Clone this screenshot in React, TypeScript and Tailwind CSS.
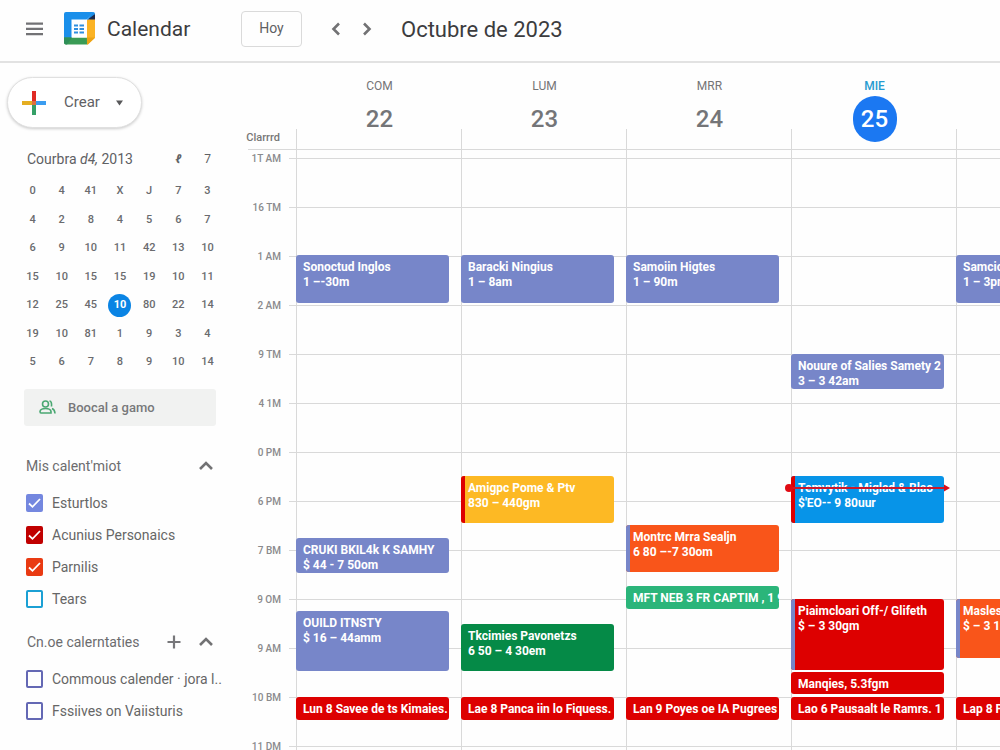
import React from "react";

type CalendarEvent = {
  title: string;
  time?: string;
  box: string;
  stripe?: string;
  now?: boolean;
};

type Day = {
  name: string;
  date: string;
  today?: boolean;
  events: CalendarEvent[];
};

type Source = { name: string; color: string; checked?: boolean };

const hours = ["1T AM", "16 TM", "1 AM", "2 AM", "9 TM", "4 1M", "0 PM", "6 PM", "7 BM", "9 OM", "9 AM", "10 BM", "11 DM"];

const days: Day[] = [
  {
    name: "COM",
    date: "22",
    events: [
      { title: "Sonoctud Inglos", time: "1 –-30m", box: "mt-[97px] h-[48px] bg-[#7786c9]" },
      { title: "CRUKI BKIL4k K SAMHY", time: "$ 44 - 7 50om", box: "mt-[235px] h-[35px] bg-[#7786c9]" },
      { title: "OUILD ITNSTY", time: "$ 16 – 44amm", box: "mt-[38px] h-[60px] bg-[#7786c9]" },
      { title: "Lun 8 Savee de ts Kimaies.", box: "mt-[26px] h-[23px] bg-[#dd0000]" },
    ],
  },
  {
    name: "LUM",
    date: "23",
    events: [
      { title: "Baracki Ningius", time: "1 – 8am", box: "mt-[97px] h-[48px] bg-[#7786c9]" },
      { title: "Amigpc Pome & Ptv", time: "830 – 440gm", box: "mt-[173px] h-[47px] bg-[#fdb924]", stripe: "bg-[#dd0000]" },
      { title: "Tkcimies Pavonetzs", time: "6 50 – 4 30em", box: "mt-[101px] h-[47px] bg-[#058a47]" },
      { title: "Lae 8 Panca iin lo Fiquess.", box: "mt-[26px] h-[23px] bg-[#dd0000]" },
    ],
  },
  {
    name: "MRR",
    date: "24",
    events: [
      { title: "Samoiin Higtes", time: "1 – 90m", box: "mt-[97px] h-[48px] bg-[#7786c9]" },
      { title: "Montrc Mrra Sealjn", time: "6 80 –-7 30om", box: "mt-[222px] h-[47px] bg-[#f9551a]", stripe: "bg-[#7786c9]" },
      { title: "MFT NEB 3 FR CAPTIM , 1 9", box: "mt-[14px] h-[23px] bg-[#2bb57a]" },
      { title: "Lan 9 Poyes oe IA Pugrees 1", box: "mt-[88px] h-[23px] bg-[#dd0000]" },
    ],
  },
  {
    name: "MIE",
    date: "25",
    today: true,
    events: [
      { title: "Nouure of Salies Samety 2", time: "3 – 3 42am", box: "mt-[196px] h-[35px] bg-[#7786c9]" },
      { title: "Temvytik - Miglad & Blao", time: "$'EO-- 9 80uur", box: "mt-[87px] h-[47px] bg-[#0794e8]", stripe: "bg-[#dd0000]", now: true },
      { title: "Piaimcloari Off-/ Glifeth", time: "$ – 3 30gm", box: "mt-[76px] h-[71px] bg-[#dd0000]", stripe: "bg-[#7786c9]" },
      { title: "Manqies, 5.3fgm", box: "mt-[2px] h-[22px] bg-[#dd0000]" },
      { title: "Lao 6 Pausaalt le Ramrs. 1", box: "mt-[3px] h-[23px] bg-[#dd0000]" },
    ],
  },
  {
    name: "",
    date: "",
    events: [
      { title: "Samcic", time: "1 – 3pm", box: "mt-[97px] h-[48px] bg-[#7786c9]" },
      { title: "Masles", time: "$ – 3 10", box: "mt-[296px] h-[59px] bg-[#f9551a]", stripe: "bg-[#7786c9]" },
      { title: "Lap 8 Panca", box: "mt-[39px] h-[23px] bg-[#dd0000]" },
    ],
  },
];

const miniHead = ["0", "4", "41", "X", "J", "7", "3"];
const miniRows = [
  ["4", "2", "8", "4", "5", "6", "7"],
  ["6", "9", "10", "11", "42", "13", "10"],
  ["15", "10", "15", "15", "19", "10", "11"],
  ["12", "25", "45", "10", "80", "22", "14"],
  ["19", "10", "81", "1", "9", "3", "4"],
  ["5", "6", "7", "8", "9", "10", "14"],
];

const mine: Source[] = [
  { name: "Esturtlos", color: "border-[#7487df] checked:bg-[#7487df]", checked: true },
  { name: "Acunius Personaics", color: "border-[#c00000] checked:bg-[#c00000]", checked: true },
  { name: "Parnilis", color: "border-[#e93a12] checked:bg-[#e93a12]", checked: true },
  { name: "Tears", color: "border-[#1ba0d4]" },
];

const others: Source[] = [
  { name: "Commous calender · jora l..", color: "border-[#6468b4]" },
  { name: "Fssiives on Vaiisturis", color: "border-[#6468b4]" },
];

function Logo() {
  return (
    <svg width="31" height="33" viewBox="0 0 31 33" aria-hidden="true">
      <path d="M2 0H29.500L22 8H8V26H0V2Q0 0 2 0Z" fill="#1a8fea" />
      <path d="M0 25.500H24L23 32.500H2Q0 32.500 0 30.500Z" fill="#3a9b55" />
      <path d="M0 25.500H8L3 32.500H2Q0 32.500 0 30.500Z" fill="#2f8f58" />
      <path d="M22.500 8L31 6V26L23.500 32.500H23Z" fill="#fbb324" />
      <path d="M23 25.500H31L24 32.500H23Z" fill="#eda315" />
      <path d="M30 1.500Q31 1.500 31 3V7.500H23.500Z" fill="#1d2b4d" />
      <path d="M29 0Q31 0 31 2L23 8H22Z" fill="#1a8fea" />
      <rect x="7.500" y="7.500" width="15.500" height="18" fill="#fff" />
      <g fill="#2f8fe0">
        <path d="M10 12.500H14V14.500H10ZM15.500 12.500H20V14.500H15.500ZM10 16H14V18H10ZM15.500 16H20V18H15.500ZM10 19.500H14V21.500H10ZM15.500 19.500H20V21.500H15.500Z" />
      </g>
    </svg>
  );
}

function Chevron({ d, size }: { d: string; size: number }) {
  return (
    <svg width={size} height={size} viewBox="0 0 16 16" fill="none" stroke="#727274" strokeWidth="2.600" aria-hidden="true">
      <path d={d} />
    </svg>
  );
}

function SourceRow({ source }: { source: Source }) {
  return (
    <label className="flex h-8 items-center gap-[9px] text-[14px] text-[#666]">
      <span className="grid shrink-0 place-items-center">
        <input
          type="checkbox"
          defaultChecked={source.checked}
          className={"peer col-start-1 row-start-1 h-[18px] w-[17px] appearance-none rounded-[2px] border-2 " + source.color}
        />
        <svg className="pointer-events-none invisible col-start-1 row-start-1 peer-checked:visible" width="13" height="12" viewBox="0 0 13 12" fill="none" stroke="#fff" strokeWidth="1.800" aria-hidden="true">
          <path d="M1 6.500L4.500 9.800L12 2" />
        </svg>
      </span>
      <span className="whitespace-nowrap">{source.name}</span>
    </label>
  );
}

function EventCard({ event }: { event: CalendarEvent }) {
  return (
    <article className={"relative mr-[12px] shrink-0 rounded-[3px] text-[12px] leading-[15px] font-bold text-white " + event.box}>
      <div className="flex h-full overflow-hidden rounded-[3px]">
        <span className={"w-[4px] shrink-0 " + (event.stripe ?? "")} />
        <div className="min-w-0 pt-[5px] pl-[3px]">
          <p className="whitespace-nowrap">{event.title}</p>
          {event.time && <p className="whitespace-nowrap">{event.time}</p>}
        </div>
      </div>
      {event.now && (
        <div className="absolute top-[8px] -right-[6px] -left-[6px] flex items-center">
          <span className="h-[8px] w-[8px] rounded-full bg-[#e00b14]" />
          <span className="h-[2px] flex-1 bg-[#c9182b]" />
          <svg width="6" height="8" viewBox="0 0 6 8" aria-hidden="true">
            <path d="M0 0.500L6 4L0 7.500Z" fill="#d8101c" />
          </svg>
        </div>
      )}
    </article>
  );
}

export default function App() {
  return (
    <div className="flex h-screen flex-col overflow-hidden bg-[#fefefe] font-[Roboto,'Liberation_Sans',sans-serif] text-[#5f6164]">
      <header className="flex h-[63px] shrink-0 items-center border-b-2 border-[#e2e2e2] pb-[4px] pl-[26px]">
        <button aria-label="Menu" className="mr-[21px]">
          <svg width="17" height="14" viewBox="0 0 17 14" fill="#727275" aria-hidden="true">
            <path d="M0 0.500H17V2.800H0ZM0 5.800H17V8.100H0ZM0 11H17V13.300H0Z" />
          </svg>
        </button>
        <Logo />
        <h1 className="ml-[12px] w-[134px] pt-[2px] text-[21px] text-[#3c3c3e]">Calendar</h1>
        <button className="h-[36px] w-[61px] rounded-[4px] border border-[#dadada] text-[14px]">Hoy</button>
        <button aria-label="Anterior" className="ml-[26px]">
          <Chevron size={16} d="M11 2.500L5.500 8L11 13.500" />
        </button>
        <button aria-label="Siguiente" className="ml-[15px]">
          <Chevron size={16} d="M5 2.500L10.500 8L5 13.500" />
        </button>
        <h2 className="ml-[26px] pt-[2px] text-[22px] text-[#3c3c3e]">Octubre de 2023</h2>
      </header>

      <div className="flex min-h-0 flex-1">
        <aside className="w-[240px] shrink-0 overflow-hidden pt-[14px]">
          <button className="ml-[7px] flex h-[51px] w-[135px] items-center rounded-full border border-[#e0e0e0] bg-white pl-[14px] text-[15px] text-[#5f6164] shadow-[0_1px_3px_rgba(0,0,0,0.2)]">
            <svg width="24" height="24" viewBox="0 0 24 24" aria-hidden="true">
              <path d="M10 0H14V10H10Z" fill="#e02b24" />
              <path d="M0 10H10V14H0Z" fill="#e5ae22" />
              <path d="M14 10H24V14H14Z" fill="#3b9df0" />
              <path d="M10 14H14V24H10Z" fill="#35a067" />
              <path d="M10 10H14V14H10Z" fill="#dd7040" />
            </svg>
            <span className="ml-[18px]">Crear</span>
            <svg className="ml-[16px]" width="7" height="6" viewBox="0 0 7 6" fill="#58585a" aria-hidden="true">
              <path d="M0 0.500H7L3.500 5.500Z" />
            </svg>
          </button>

          <div className="mt-[21px] flex h-[20px] items-center pr-[18px] pl-[27px]">
            <h3 className="flex-1 text-[14px]">
              Courbra <i>d4,</i> 2013
            </h3>
            <button className="w-[29px] text-[12px] font-bold italic">ℓ</button>
            <button className="w-[29px] text-[12px]">7</button>
          </div>

          <table className="mt-[8px] ml-[18px] w-[204px] table-fixed border-collapse text-center text-[11px] leading-[14px] font-medium text-[#6a6b6e]">
            <thead>
              <tr className="h-[28px]">
                {miniHead.map((label, i) => (
                  <th key={i} className="p-0 font-medium">{label}</th>
                ))}
              </tr>
            </thead>
            <tbody>
              {miniRows.map((row, r) => (
                <tr key={r} className="odd:h-[29px] even:h-[28px]">
                  {row.map((value, c) => (
                    <td key={c} className="p-0">
                      {r === 3 && c === 3 ? (
                        <span className="mx-auto grid h-[23px] w-[23px] place-items-center rounded-full bg-[#0a84e4] font-bold text-white">{value}</span>
                      ) : (
                        value
                      )}
                    </td>
                  ))}
                </tr>
              ))}
            </tbody>
          </table>

          <label className="mt-[13px] ml-[24px] flex h-[37px] w-[192px] items-center rounded-[3px] bg-[#f1f2f1] pl-[15px]">
            <svg width="17" height="15" viewBox="0 0 17 15" fill="none" stroke="#4aa872" strokeWidth="1.600" aria-hidden="true">
              <circle cx="6.500" cy="4" r="3" />
              <path d="M10.500 1Q13 1.200 12.500 6.500" />
              <path d="M1 11.500Q1.500 8.500 6.500 8.500Q11.500 8.500 12 11.500V13H2Q1 13 1 11.500Z" />
              <path d="M13 8.500Q15.800 9.500 16 13.500" />
            </svg>
            <input type="text" aria-label="Boocal a gamo" placeholder="Boocal a gamo" className="ml-[12px] w-[130px] bg-transparent text-[13px] font-medium outline-none placeholder:text-[#77787a]" />
          </label>

          <div className="mt-[29px] flex h-[22px] items-center justify-between pr-[26px] pl-[26px] text-[#6c6c6e]">
            <h3 className="text-[14px]">Mis calent'miot</h3>
            <button aria-label="Contraer">
              <Chevron size={16} d="M2 11L8 5L14 11" />
            </button>
          </div>
          <div className="mt-[10px] pl-[26px]">
            {mine.map((source) => (
              <SourceRow key={source.name} source={source} />
            ))}
          </div>

          <div className="mt-[16px] flex h-[22px] items-center pr-[26px] pl-[27px] text-[#6c6c6e]">
            <h3 className="flex-1 text-[14px]">Cn.oe calerntaties</h3>
            <button aria-label="Agregar" className="mr-[17px]">
              <svg width="14" height="14" viewBox="0 0 14 14" fill="none" stroke="#77777a" strokeWidth="2.200" aria-hidden="true">
                <path d="M7 0.500V13.500M0.500 7H13.500" />
              </svg>
            </button>
            <button aria-label="Contraer">
              <Chevron size={16} d="M2 11L8 5L14 11" />
            </button>
          </div>
          <div className="mt-[10px] pl-[26px]">
            {others.map((source) => (
              <SourceRow key={source.name} source={source} />
            ))}
          </div>
        </aside>

        <main className="min-w-0 flex-1 overflow-hidden">
          <div className="flex h-[86px]">
            <div className="flex w-[56px] shrink-0 items-end justify-end pr-[16px]">
              <span className="pb-[4px] text-[11px] leading-[14px] font-medium text-[#777]">Clarrrd</span>
            </div>
            <div className="grid flex-1 grid-cols-[repeat(5,minmax(165px,1fr))]">
              {days.map((day, i) => (
                <div key={i} className="relative flex flex-col items-center pt-[16px] pl-[2px]">
                  <span className="absolute bottom-0 left-0 h-[20px] w-px bg-[#d9d9d9]" />
                  <span className={"h-[14px] text-[12px] leading-[14px] " + (day.today ? "font-medium text-[#279bd0]" : "text-[#747476]")}>{day.name}</span>
                  <span className={"mt-[3px] grid h-[46px] w-[44px] place-items-center rounded-full text-[24px] font-medium " + (day.today ? "bg-[#1b78f2] text-white" : "text-[#747578]")}>
                    {day.date}
                  </span>
                </div>
              ))}
            </div>
          </div>
          <div className="ml-[8px] h-px bg-[#d9d9d9]" />

          <div className="grid">
            <div className="col-start-1 row-start-1">
              {hours.map((hour, i) => (
                <div key={i} className="flex h-[49px] items-start">
                  <span className="w-[41px] pt-[2px] text-right text-[10px] leading-[14px] font-medium text-[#8a8a8c]">{hour}</span>
                  <span className="mt-[8px] ml-[8px] h-px flex-1 bg-[#d9d9d9]" />
                </div>
              ))}
            </div>
            <div className="col-start-1 row-start-1 ml-[56px] grid min-w-0 grid-cols-[repeat(5,minmax(165px,1fr))]">
              {days.map((day, i) => (
                <div key={i} className="flex flex-col border-l border-[#d9d9d9] pt-[8px]">
                  <div className="-ml-px flex flex-col">
                    {day.events.map((event, e) => (
                      <EventCard key={e} event={event} />
                    ))}
                  </div>
                </div>
              ))}
            </div>
          </div>
        </main>
      </div>
    </div>
  );
}
